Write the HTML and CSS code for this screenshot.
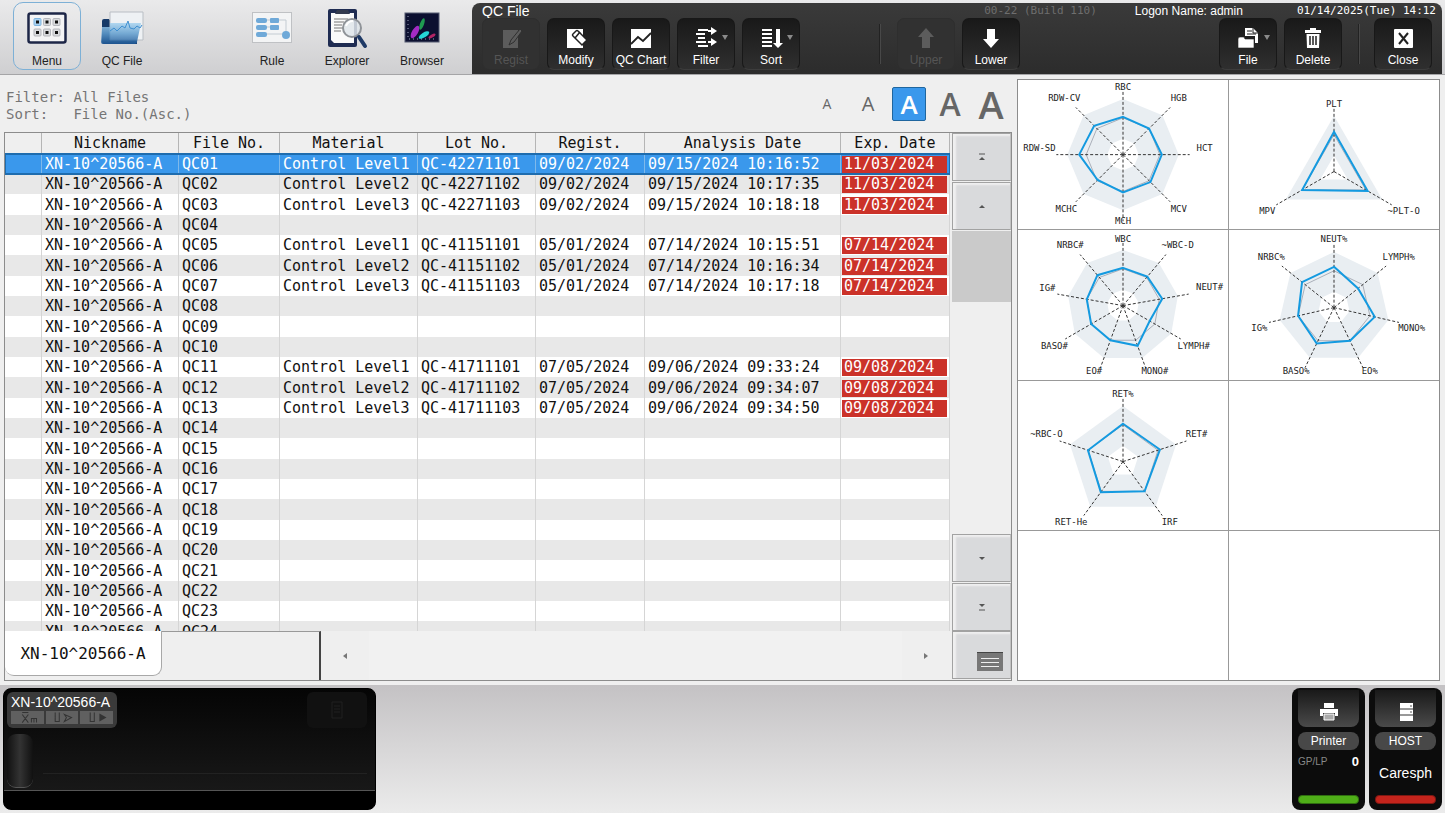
FILE: index.html
```html
<!DOCTYPE html>
<html lang="en">
<head>
  <meta charset="UTF-8">
  <meta name="viewport" content="width=device-width, initial-scale=1.0">
  <title>QC File</title>
  <link rel="stylesheet" href="styles.css">
</head>
<body>
  <header class="topbar">
    <nav class="launcher">
      <button class="launch active">
        <svg width="40" height="34" viewBox="0 0 40 34">
          <rect x="1.500" y="2.500" width="37" height="29" rx="2" fill="#f4f4f5" stroke="#1d2647" stroke-width="2.500"/>
          <g stroke="#b4b6bb" fill="#d9dadd">
            <rect x="7" y="7.500" width="7" height="7" rx="1" fill="#a9d2f2" stroke="#7fb4de"/><rect x="16.500" y="7.500" width="7" height="7" rx="1"/><rect x="26" y="7.500" width="7" height="7" rx="1"/>
            <rect x="7" y="18" width="7" height="7" rx="1"/><rect x="16.500" y="18" width="7" height="7" rx="1"/><rect x="26" y="18" width="7" height="7" rx="1"/>
          </g>
          <g fill="#111"><rect x="9" y="9.500" width="3" height="3"/><rect x="18.500" y="9.500" width="3" height="3"/><rect x="28" y="9.500" width="3" height="3"/><rect x="9" y="20" width="3" height="3"/><rect x="18.500" y="20" width="3" height="3"/><rect x="28" y="20" width="3" height="3"/></g>
        </svg>
        <span>Menu</span>
      </button>
      <button class="launch">
        <svg width="44" height="38" viewBox="0 0 44 38">
          <defs><linearGradient id="folder" x1="0" y1="0" x2="0" y2="1"><stop offset="0" stop-color="#a6d3f0"/><stop offset=".5" stop-color="#5f9ccd"/><stop offset="1" stop-color="#1d5796"/></linearGradient></defs>
          <path d="M2 12q0-2 2-2h5l2 3h26v22H4q-2 0-2-2z" fill="#173a68"/>
          <path d="M10 3h33v28H10z" fill="#eef1f4" stroke="#b9bec4"/>
          <path d="M10 14h31l-4 19q0 2-2 2H3q-2 0-2-2l1-15h8z" fill="url(#folder)" opacity=".85"/>
          <path d="M10 22l4-3 3 3 5-5 3 2 3-7 2 7 4 1 3-3 3 2 2-3" fill="none" stroke="#3f8fd0"/>
        </svg>
        <span>QC File</span>
      </button>
      <button class="launch third">
        <svg width="40" height="34" viewBox="0 0 40 34">
          <rect x=".5" y="1.500" width="39" height="30" fill="#f3f4f5" stroke="#bfc1c4"/>
          <path d="M8 9h26v16M8 16h18M8 23h22" fill="none" stroke="#c3cbd2"/>
          <g fill="#6fa9d8"><rect x="4" y="7" width="11" height="5" rx="2"/><rect x="18" y="7" width="9" height="5" rx="1"/><rect x="4" y="14" width="11" height="5" rx="2"/><rect x="18" y="14" width="9" height="5" rx="1"/><rect x="4" y="21" width="11" height="5" rx="2"/><circle cx="34" cy="24" r="4"/></g>
        </svg>
        <span>Rule</span>
      </button>
      <button class="launch">
        <svg width="42" height="42" viewBox="0 0 42 42">
          <rect x="2" y="2" width="29" height="38" rx="2" fill="#1f2c52"/>
          <path d="M5 6h23v30H8l-3-3z" fill="#fafafa"/><path d="M11 3h11l2 4H9z" fill="#333a4e"/>
          <path d="M8 12h14M8 15h10M8 18h8M8 21h9M8 24h7" stroke="#777"/>
          <circle cx="26" cy="21" r="9" fill="#dfe5ea" fill-opacity=".85" stroke="#8f9398" stroke-width="2"/>
          <path d="M20 19q2-5 7-5" fill="none" stroke="#fff" stroke-width="2"/>
          <path d="M33 30l6 9" stroke="#1f3a66" stroke-width="4" stroke-linecap="round"/>
        </svg>
        <span>Explorer</span>
      </button>
      <button class="launch">
        <svg width="36" height="32" viewBox="0 0 36 32">
          <rect x="1" y="1" width="34" height="29" fill="#0c1030" stroke="#555b70"/>
          <path d="M4 4v23h28" fill="none" stroke="#9aa0b8" stroke-dasharray="1 3"/>
          <ellipse cx="11" cy="20" rx="3" ry="7" fill="#a32bc4" transform="rotate(30 11 20)"/>
          <ellipse cx="18" cy="12" rx="2" ry="6" fill="#1f9a50" transform="rotate(20 18 12)"/>
          <ellipse cx="20" cy="23" rx="6" ry="2.500" fill="#25d6d6" transform="rotate(-32 20 23)"/>
          <ellipse cx="28" cy="24" rx="4" ry="1.500" fill="#b12465" transform="rotate(-32 28 24)"/>
        </svg>
        <span>Browser</span>
      </button>
    </nav>

    <section class="toolbar">
      <div class="status-line">
        <h1>QC File</h1>
        <span class="build">00-22 (Build 110)</span>
        <span class="logon">Logon Name: admin</span>
        <time class="clock">01/14/2025(Tue) 14:12</time>
      </div>
      <div class="tools">
        <button class="tool" disabled>
          <svg width="24" height="22" viewBox="0 0 24 22"><path d="M4 3h15v18H4z" fill="#5c5c5c"/><path d="M21 2l-9 11-2 5 5-3 8-11z" fill="#5c5c5c" stroke="#303030"/></svg>
          <span>Regist</span>
        </button>
        <button class="tool">
          <svg width="24" height="22" viewBox="0 0 24 22"><path d="M3 2h16v19H3z" fill="#fff"/><path d="M14 4l9 9-5 5-9-9q-1-1 0-2l3-3q1-1 2 0z" fill="#fff" stroke="#222" stroke-width="1.500"/><path d="M11 11l5-6" stroke="#222" stroke-width="1.500"/></svg>
          <span>Modify</span>
        </button>
        <button class="tool">
          <svg width="24" height="22" viewBox="0 0 24 22"><path d="M2 2h20v19H2z" fill="#fff"/><path d="M2 17l7-7 5 4 8-8" fill="none" stroke="#222" stroke-width="1.800"/></svg>
          <span>QC Chart</span>
        </button>
        <button class="tool has-menu">
          <svg width="24" height="22" viewBox="0 0 24 22"><path d="M4 3h10M2 7h9M4 11h7M2 15h10M4 19h10" stroke="#fff" stroke-width="2"/><path d="M14 4h5M14 15h5" stroke="#fff" stroke-width="2"/><path d="M17 0l6 4-6 4zM17 11l6 4-6 4z" fill="#fff"/></svg>
          <span>Filter</span>
        </button>
        <button class="tool has-menu">
          <svg width="24" height="22" viewBox="0 0 24 22"><path d="M3 3h10M3 7h10M3 11h10M3 15h10M3 19h10" stroke="#fff" stroke-width="2"/><path d="M17 2h4v14h3l-5 5-5-5h3z" fill="#fff"/></svg>
          <span>Sort</span>
        </button>
        <i class="divider wide"></i>
        <button class="tool" disabled>
          <svg width="24" height="22" viewBox="0 0 24 22"><path d="M12 1l8 9h-4v11H8V10H4z" fill="#5c5c5c"/></svg>
          <span>Upper</span>
        </button>
        <button class="tool">
          <svg width="24" height="22" viewBox="0 0 24 22"><path d="M12 21l8-9h-4V2H8v10H4z" fill="#fff"/></svg>
          <span>Lower</span>
        </button>
        <button class="tool has-menu push">
          <svg width="24" height="22" viewBox="0 0 24 22"><path d="M9 9V1h8l5 5v10h-3V9z" fill="#fff"/><path d="M11 4h5M11 7h9M17 1v5h5" fill="none" stroke="#222"/><path d="M2 12q0-2 2-2h4l1 2h9v9H2z" fill="#fff" stroke="#222" stroke-width=".6"/></svg>
          <span>File</span>
        </button>
        <button class="tool">
          <svg width="24" height="22" viewBox="0 0 24 22"><path d="M9 1h6v2h5v3H4V3h5z" fill="#fff"/><path d="M5.500 7h13L18 21H6z" fill="#fff"/><path d="M9 9v9M12 9v9M15 9v9" stroke="#222" stroke-width="1.500"/></svg>
          <span>Delete</span>
        </button>
        <i class="divider"></i>
        <button class="tool">
          <svg width="24" height="22" viewBox="0 0 24 22"><rect x="3" y="2" width="19" height="19" rx="1" fill="#fff"/><path d="M8 6l9 11M17 6L8 17" stroke="#222" stroke-width="2"/></svg>
          <span>Close</span>
        </button>
      </div>
    </section>
  </header>

  <main class="workspace">
    <section class="files">
      <div class="files-head">
        <pre class="criteria">Filter: All Files
Sort:   File No.(Asc.)</pre>
        <div class="text-size">
          <button class="s1">A</button>
          <button class="s2">A</button>
          <button class="s3 selected">A</button>
          <button class="s4">A</button>
          <button class="s5">A</button>
        </div>
      </div>
      <div class="frame">
        <div class="rows">
          <table>
            <colgroup>
              <col class="c-mark"><col class="c-nick"><col class="c-file"><col class="c-mat"><col class="c-lot"><col class="c-reg"><col class="c-ana"><col class="c-exp">
            </colgroup>
            <thead>
              <tr><th></th><th>Nickname</th><th>File No.</th><th>Material</th><th>Lot No.</th><th>Regist.</th><th>Analysis Date</th><th>Exp. Date</th></tr>
            </thead>
            <tbody id="file-rows"></tbody>
          </table>
        </div>
        <div class="scroller">
          <button class="key" aria-label="First"><svg width="8" height="8" viewBox="0 0 8 8"><path d="M1 1h6" stroke="#555"/><path d="M1 7l3-3 3 3z" fill="#555"/></svg></button>
          <button class="key" aria-label="Up"><svg width="8" height="8" viewBox="0 0 8 8"><path d="M1 6l3-3 3 3z" fill="#555"/></svg></button>
          <div class="thumb"></div>
          <div class="track"></div>
          <button class="key" aria-label="Down"><svg width="8" height="8" viewBox="0 0 8 8"><path d="M1 3h6L4 6z" fill="#555"/></svg></button>
          <button class="key" aria-label="Last"><svg width="8" height="8" viewBox="0 0 8 8"><path d="M1 1h6L4 4z" fill="#555"/><path d="M1 7h6" stroke="#555"/></svg></button>
        </div>
        <div class="tabs">
          <div class="tab-strip"><button class="tab">XN-10^20566-A</button></div>
          <button class="arrow" aria-label="Left"><svg width="6" height="8" viewBox="0 0 6 8"><path d="M5 1v6L1 4z" fill="#777"/></svg></button>
          <div class="h-track"></div>
          <button class="arrow" aria-label="Right"><svg width="6" height="8" viewBox="0 0 6 8"><path d="M1 1v6l4-3z" fill="#777"/></svg></button>
        </div>
        <button class="key corner" aria-label="List">
          <svg width="26" height="19" viewBox="0 0 26 19"><path d="M0 0h26v19H0z" fill="#777"/><path d="M0 .5h26" stroke="#444"/><path d="M4 6.500h18M4 10.500h18M4 14.500h18" stroke="#eee"/></svg>
        </button>
      </div>
    </section>
    <section class="charts" id="charts"></section>
  </main>

  <footer class="dock">
    <section class="analyzer">
      <div class="unit">
        <span>XN-10^20566-A</span>
        <div class="modes">
          <svg viewBox="0 0 32 12"><path d="M11 3l6 8M17 3l-6 8M11 1h6M20 11V7h5v4M22.500 7v4" fill="none" stroke="#333"/></svg>
          <svg viewBox="0 0 32 12"><path d="M9 1v9h4V1M18 3l7 3-7 4 2-4z" fill="none" stroke="#333"/></svg>
          <svg viewBox="0 0 32 12"><path d="M10 1v9h4V1" fill="none" stroke="#333"/><path d="M19 2l7 4-7 4z" fill="#333"/></svg>
        </div>
      </div>
      <div class="slot"><svg width="12" height="18" viewBox="0 0 12 18"><path d="M1 1h10v16H1zM3 5h6M3 8h6M3 11h6" fill="none" stroke="#202020"/></svg></div>
      <div class="lower">
        <div class="gauge"></div>
        <div class="message"></div>
      </div>
    </section>
    <section class="device">
      <button class="device-key" aria-label="Printer"><svg width="20" height="20" viewBox="0 0 20 20"><path d="M5 1h10v5H5zM1 7h18v7h-3v-3H4v3H1z" fill="#fff"/><path d="M5 12h10v6H5z" fill="#aaa" stroke="#fff"/></svg></button>
      <span class="device-name">Printer</span>
      <p class="device-info queue"><small>GP/LP</small> <b>0</b></p>
      <i class="lamp green"></i>
    </section>
    <section class="device">
      <button class="device-key" aria-label="Host"><svg width="20" height="20" viewBox="0 0 20 20"><path d="M4 1h13v18H4z" fill="#fff"/><path d="M4 7h13M4 13h13" stroke="#333"/><path d="M14 4h2M14 10h2" stroke="#555"/></svg></button>
      <span class="device-name">HOST</span>
      <p class="device-info">Caresph</p>
      <i class="lamp red"></i>
    </section>
  </footer>
  <script src="script.js"></script>
</body>
</html>
```
FILE: styles.css
```css
* {
  box-sizing: border-box;
}
body {
  margin: 0;
  height: 100vh;
  display: flex;
  flex-direction: column;
  background: #e4e4e5;
  font-family: "Liberation Sans", Arial, sans-serif;
  color: #111;
  overflow: hidden;
}
button {
  font: inherit;
  color: inherit;
  border: 0;
  padding: 0;
  background: none;
}
svg {
  display: block;
}

/* top bar */
.topbar {
  display: flex;
  height: 75px;
  flex: none;
  padding-right: 3px;
  background: linear-gradient(#eaeaeb, #cfcfd1);
  border-bottom: 1px solid #a5a5a7;
}
.launcher {
  display: flex;
  width: 472px;
  flex: none;
  gap: 7px;
  padding: 2px 0 4px 13px;
}
.launch {
  width: 68px;
  display: flex;
  flex-direction: column;
  align-items: center;
  justify-content: flex-end;
  font-size: 12px;
  color: #222;
  border: 1px solid transparent;
  border-radius: 10px;
}
.launch svg {
  margin: auto 0;
}
.launch span {
  line-height: 16px;
}
.launch.active {
  border-color: #7db0d6;
  background: rgba(255, 255, 255, 0.15);
}
.launch.third {
  margin-left: 75px;
}
.toolbar {
  flex: 1;
  margin-top: 3px;
  padding: 0 10px;
  background: linear-gradient(#3a3a3a, #2c2c2c);
  border-radius: 8px 8px 0 0;
  color: #fff;
}
.status-line {
  display: flex;
  height: 15px;
  align-items: center;
  margin-right: -4px;
  font-size: 12px;
  white-space: nowrap;
}
.status-line h1 {
  margin: 0 auto 0 0;
  font-size: 14px;
  font-weight: normal;
}
.build,
.clock {
  font-family: "DejaVu Sans Mono", monospace;
  font-size: 11px;
}
.build {
  color: #6e6e6e;
}
.logon {
  margin: 0 54px 0 38px;
}
.tools {
  display: flex;
  gap: 7px;
}
.tool {
  position: relative;
  width: 58px;
  height: 52px;
  display: flex;
  flex-direction: column;
  align-items: center;
  justify-content: space-between;
  padding: 8px 0 1px;
  font-size: 12px;
  line-height: 16px;
  white-space: nowrap;
  border: 1px solid #181818;
  border-bottom-color: #3c3c3c;
  border-radius: 7px;
  background: linear-gradient(#191919, #2f2f2f);
}
.tool:disabled {
  color: #555;
  background: #313131;
  border-color: #2e2e2e;
}
.has-menu::after {
  content: "";
  position: absolute;
  top: 16px;
  right: 6px;
  border: 3px solid transparent;
  border-top: 5px solid #8a8a8a;
  border-bottom: 0;
}
.divider {
  width: 2px;
  height: 40px;
  margin: 6px 7px 0 9px;
  background: #222;
  border-right: 1px solid #484848;
}
.divider.wide {
  margin: 6px 9px 0 72px;
}
.push {
  margin-left: auto;
}

/* file list */
.workspace {
  flex: 1;
  min-height: 0;
  display: grid;
  grid-template: minmax(0, 1fr) / minmax(0, 1fr) 428px;
  gap: 5px;
  padding: 0 0 4px 4px;
  background: #efefef;
}
.files {
  display: flex;
  flex-direction: column;
  min-height: 0;
}
.files-head {
  display: flex;
  justify-content: space-between;
  height: 57px;
  flex: none;
  padding: 0 0 0 2px;
}
.criteria {
  margin: 14px 0 0;
  font: 14px/17px "DejaVu Sans Mono", monospace;
  color: #757575;
}
.text-size {
  display: grid;
  grid-template-columns: repeat(5, 34px);
  gap: 7px;
  align-items: center;
  padding: 1px 4px 0 0;
  font-family: "Open Sans", sans-serif;
  font-weight: 600;
  color: #666;
}
.text-size button {
  height: 34px;
  line-height: 30px;
}
.text-size .s1 {
  font-size: 14px;
  font-weight: normal;
}
.text-size .s2 {
  font-size: 20px;
  font-weight: normal;
}
.text-size .s3 { font-size: 26px; }
.text-size .s4 { font-size: 32px; }
.text-size .s5 { font-size: 38px; }
.text-size .selected {
  color: #fff;
  background: #3a98ec;
  border: 1px solid #1f669f;
  border-radius: 2px;
}
.frame {
  flex: 1;
  min-height: 0;
  display: grid;
  grid-template: minmax(0, 1fr) 49px / minmax(0, 1fr) 59px;
  column-gap: 2px;
  border: 1px solid #8c8c8c;
}
.rows {
  overflow: hidden;
  background: #f6f6f6;
  font: 15px/19px "DejaVu Sans Mono", monospace;
}
table {
  width: 100%;
  table-layout: fixed;
  border-collapse: separate;
  border-spacing: 0;
  white-space: nowrap;
}
.c-mark { width: 37px; }
.c-nick { width: 137px; }
.c-file { width: 101px; }
.c-mat { width: 138px; }
.c-lot { width: 118px; }
.c-reg { width: 109px; }
.c-ana { width: 196px; }
.c-exp { width: 109px; }
th {
  height: 21px;
  padding: 0;
  font-weight: normal;
  background: #efefef;
  border-right: 1px solid #b5b5b5;
}
td {
  height: 20px;
  padding: 1px 0 0 3px;
  background: #fff;
  border-right: 1px solid #d5d5d5;
}
/* keeps the pitch at 61px per three rows */
tbody tr:nth-child(3n) td {
  height: 21px;
}
tbody tr:nth-child(even) td {
  background: #e8e8e8;
}
tbody tr.selected td {
  color: #fff;
  background: #3a98ec;
  border-color: #7fb9ea;
}
tr.selected {
  outline: 2px solid #1e6cae;
  outline-offset: -1px;
}
.expired {
  display: block;
  height: 17px;
  line-height: 17px;
  margin: 0 2px 0 -2px;
  padding-left: 2px;
  color: #fff;
  background: #cb3229;
}

/* scroll keys */
.scroller {
  display: flex;
  flex-direction: column;
  gap: 1px;
}
.key {
  flex: none;
  height: 48px;
  display: flex;
  align-items: center;
  justify-content: center;
  background: #d9dadc;
  border: 1px solid #a2a2a2;
  border-right-color: #c2c2c2;
  box-shadow: inset 3px 2px 2px #f0f0f0;
}
.thumb {
  height: 71px;
  background: #cacaca;
}
.track {
  flex: 1;
}
.tabs {
  display: flex;
  min-width: 0;
  background: #efefef;
}
.tab-strip {
  width: 316px;
  border-top: 1px solid #999;
  border-right: 2px solid #444;
}
.tab {
  width: 157px;
  height: 45px;
  margin-top: -1px;
  font: 16px "DejaVu Sans Mono", monospace;
  background: #fff;
  border: 1px solid #a8a8a8;
  border-width: 0 1px 1px 0;
  border-radius: 0 0 9px 9px;
}
.arrow {
  width: 48px;
  display: flex;
  align-items: center;
  justify-content: center;
}
.h-track {
  flex: 1;
  background: #f1f1f1;
}
.corner {
  align-items: flex-end;
  justify-content: flex-end;
  padding: 0 7px 7px 0;
}

/* radar charts */
.charts {
  display: grid;
  grid-template: repeat(4, minmax(0, 1fr)) / repeat(2, minmax(0, 1fr));
  gap: 1px;
  margin: 4px 5px 0 0;
  background: #999;
  border: 1px solid #8c8c8c;
}
.chart {
  background: #fff;
}
.chart svg {
  width: 100%;
  height: 100%;
}
.band { fill: #e9eef2; }
.hole { fill: #fff; }
.axis {
  stroke: #333;
  stroke-dasharray: 3 2;
}
.target {
  fill: none;
  stroke: #a9aeb8;
}
.value {
  fill: none;
  stroke: #149ae0;
  stroke-width: 2px;
}
.chart text {
  font: 9px "DejaVu Sans Mono", monospace;
  text-anchor: middle;
  dominant-baseline: central;
  fill: #222;
}

/* bottom dock */
.dock {
  flex: none;
  display: flex;
  gap: 4px;
  height: 128px;
  padding: 3px;
  background: linear-gradient(#c4c2c4, #ebebeb);
}
.analyzer {
  display: grid;
  grid-template: 36px 56px / 110px 1fr 60px;
  row-gap: 6px;
  width: 373px;
  margin-right: auto;
  padding: 3px 8px 0 3px;
  background: linear-gradient(#050505, #181818 101px, #555 101px, #555 102px, #000 102px);
  border: 1px solid #000;
  border-radius: 8px;
}
.unit {
  padding: 1px 4px;
  color: #fff;
  font-size: 14px;
  line-height: 18px;
  white-space: nowrap;
  background: #3a3a3a;
  border-radius: 6px;
}
.modes {
  display: grid;
  grid-template-columns: repeat(3, 1fr);
  gap: 2px;
}
.modes svg {
  width: 100%;
  height: 13px;
  background: #606060;
}
.slot {
  grid-column: 3;
  display: flex;
  align-items: center;
  justify-content: center;
  background: #111;
  border-radius: 6px;
}
.lower {
  grid-column: 1 / -1;
  display: flex;
  gap: 10px;
}
.gauge {
  width: 26px;
  height: 54px;
  border-radius: 9px;
  background: linear-gradient(90deg, #111, #333, #111);
  border-bottom: 1px solid #555;
}
.message {
  flex: 1;
  height: 40px;
  border-bottom: 1px solid #222;
}
.device {
  width: 73px;
  display: flex;
  flex-direction: column;
  align-items: stretch;
  padding: 2px 6px 6px;
  color: #fff;
  background: #0c0c0c;
  border-radius: 8px;
}
.device-key {
  height: 37px;
  display: flex;
  align-items: center;
  justify-content: center;
  padding-top: 6px;
  border-radius: 0 0 8px 8px;
  background: linear-gradient(#191919, #4a4a4a);
}
.device-name {
  height: 18px;
  margin-top: 5px;
  font-size: 12px;
  line-height: 18px;
  text-align: center;
  background: #484848;
  border-radius: 8px;
}
.device-info {
  flex: 1;
  display: flex;
  align-items: center;
  justify-content: center;
  margin: 0;
  font-size: 14px;
}
.device-info.queue {
  align-items: flex-start;
  justify-content: space-between;
  padding: 4px 0;
}
.queue small {
  font-size: 10px;
  line-height: 16px;
  color: #888;
}
.queue b {
  font-size: 13px;
  line-height: 16px;
}
.lamp {
  height: 9px;
  border-radius: 4px;
}
.green {
  background: #4fae18;
  border: 1px solid #2f6d10;
}
.red {
  background: #c4241c;
  border: 1px solid #7c1812;
}
```
FILE: script.js
```js
const NICKNAME = 'XN-10^20566-A';
const ROW_COUNT = 24;

// file no. -> material, lot, regist., analysis date, exp. date
const files = {
  1: ['Control Level1', 'QC-42271101', '09/02/2024', '09/15/2024 10:16:52', '11/03/2024'],
  2: ['Control Level2', 'QC-42271102', '09/02/2024', '09/15/2024 10:17:35', '11/03/2024'],
  3: ['Control Level3', 'QC-42271103', '09/02/2024', '09/15/2024 10:18:18', '11/03/2024'],
  5: ['Control Level1', 'QC-41151101', '05/01/2024', '07/14/2024 10:15:51', '07/14/2024'],
  6: ['Control Level2', 'QC-41151102', '05/01/2024', '07/14/2024 10:16:34', '07/14/2024'],
  7: ['Control Level3', 'QC-41151103', '05/01/2024', '07/14/2024 10:17:18', '07/14/2024'],
  11: ['Control Level1', 'QC-41711101', '07/05/2024', '09/06/2024 09:33:24', '09/08/2024'],
  12: ['Control Level2', 'QC-41711102', '07/05/2024', '09/06/2024 09:34:07', '09/08/2024'],
  13: ['Control Level3', 'QC-41711103', '07/05/2024', '09/06/2024 09:34:50', '09/08/2024']
};

// each point: label, value radius, label x, label y
const charts = [
  { cy: 75, points: [['RBC', 38, 105, 7], ['HGB', 37, 161, 18], ['HCT', 39, 187, 68], ['MCV', 39, 161, 130], ['MCH', 38, 105, 142], ['MCHC', 36, 48, 130], ['RDW-SD', 44, 21, 68], ['RDW-CV', 41, 46, 18]] },
  { cy: 92, points: [['PLT', 40, 105, 24], ['~PLT-O', 39, 175, 132], ['MPV', 37, 38, 132]] },
  { cy: 76, points: [['WBC', 38, 105, 9], ['~WBC-D', 38, 160, 15], ['NEUT#', 40, 192, 57], ['LYMPH#', 31, 176, 117], ['MONO#', 43, 137, 142], ['EO#', 37, 76, 142], ['BASO#', 37, 36, 117], ['IG#', 37, 29, 58], ['NRBC#', 40, 52, 15]] },
  { cy: 78, points: [['NEUT%', 41, 105, 9], ['LYMPH%', 31, 170, 27], ['MONO%', 42, 183, 98], ['EO%', 37, 141, 142], ['BASO%', 40, 67, 142], ['IG%', 37, 30, 98], ['NRBC%', 41, 42, 27]] },
  { cy: 81, points: [['RET%', 38, 105, 13], ['RET#', 39, 179, 53], ['IRF', 37, 152, 142], ['RET-He', 38, 53, 142], ['~RBC-O', 37, 28, 53]] },
  null, null, null
];

function renderRows() {
  let html = '';
  for (let i = 1; i <= ROW_COUNT; i++) {
    const f = files[i] || ['', '', '', '', ''];
    const exp = f[4] ? `<span class="expired">${f[4]}</span>` : '';
    html += `<tr${i === 1 ? ' class="selected"' : ''}><td></td><td>${NICKNAME}</td><td>QC${String(i).padStart(2, '0')}</td>`
      + f.slice(0, 4).map(t => `<td>${t}</td>`).join('') + `<td>${exp}</td></tr>`;
  }
  document.getElementById('file-rows').innerHTML = html;
}

function renderChart(chart) {
  if (!chart) return '<div class="chart"></div>';
  const cx = 105;
  const n = chart.points.length;
  const at = (i, r) => {
    const a = 2 * Math.PI * i / n;
    return [(cx + r * Math.sin(a)).toFixed(1), (chart.cy - r * Math.cos(a)).toFixed(1)];
  };
  const ring = radius => chart.points.map((p, i) => at(i, radius(p)).join()).join(' ');
  const axes = chart.points.map((p, i) => {
    const [x, y] = at(i, i === 0 ? 63 : 67);
    return `<line class="axis" x1="${cx}" y1="${chart.cy}" x2="${x}" y2="${y}"/>`;
  }).join('');
  const labels = chart.points.map(p => `<text x="${p[2]}" y="${p[3]}">${p[0]}</text>`).join('');
  return `<div class="chart"><svg viewBox="0 0 210 150">
    <polygon class="band" points="${ring(() => 56)}"/>
    <polygon class="hole" points="${ring(() => 16)}"/>
    <polygon class="target" points="${ring(() => 37)}"/>
    ${axes}
    <polygon class="value" points="${ring(p => p[1])}"/>
    ${labels}</svg></div>`;
}

renderRows();
document.getElementById('charts').innerHTML = charts.map(renderChart).join('');
```
